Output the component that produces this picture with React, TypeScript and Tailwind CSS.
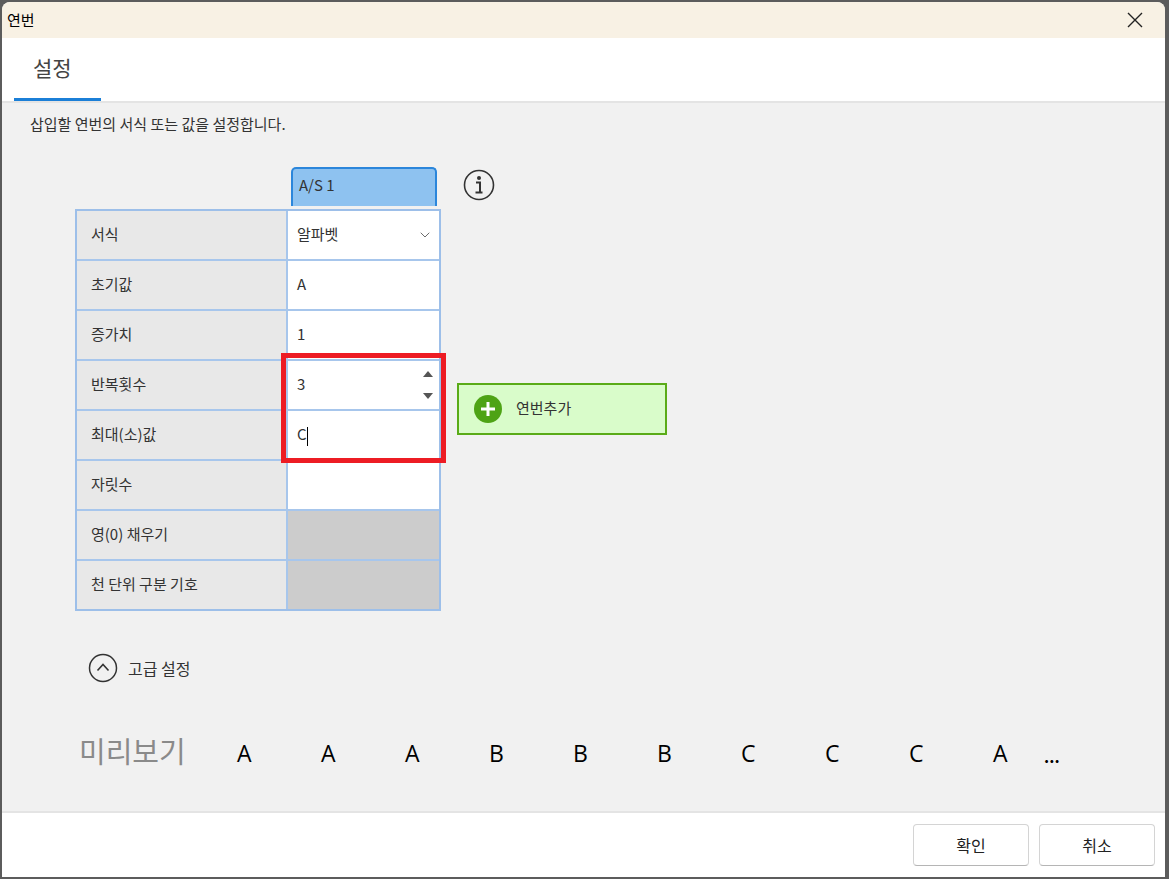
import { ChevronDown } from "lucide-react";

const F = { fontFamily: '"Noto Sans CJK KR", "Noto Sans", sans-serif' };

const rows: { label: string; value?: string; kind?: string }[] = [
  { label: "서식", value: "알파벳", kind: "select" },
  { label: "초기값", value: "A" },
  { label: "증가치", value: "1" },
  { label: "반복횟수", value: "3", kind: "spin" },
  { label: "최대(소)값", value: "C", kind: "caret" },
  { label: "자릿수", value: "" },
  { label: "영(0) 채우기", kind: "disabled" },
  { label: "천 단위 구분 기호", kind: "disabled" },
];

const preview = ["A", "A", "A", "B", "B", "B", "C", "C", "C", "A"];

export default function App() {
  return (
    <div className="w-[1169px] h-[879px] bg-[#5c5c5c] p-[2px] pr-[4px]" style={F}>
      <div className="w-full h-full rounded-t-[8px] overflow-hidden flex flex-col bg-[#f1f1f1]">
        {/* title bar */}
        <div className="h-[36px] bg-[#f8f1e4] flex items-center justify-between pl-[5px] pr-[22px]">
          <span className="text-[15px] text-black">연번</span>
          <svg width="16" height="16" viewBox="0 0 16 16" stroke="#222" strokeWidth="1.4">
            <path d="M1 1 L15 15 M15 1 L1 15" />
          </svg>
        </div>
        {/* tabs */}
        <div className="h-[65px] bg-white border-b-2 border-[#e4e4e4] flex items-end pl-[12px]">
          <div className="w-[87px] h-full flex flex-col justify-between">
            <span className="text-[21px] text-[#444] pl-[19px] pt-[14px]">설정</span>
            <div className="h-[3px] bg-[#1b7fd7]" />
          </div>
        </div>
        {/* content */}
        <div className="flex-1 relative">
          <p className="text-[15px] text-[#333] pl-[28px] pt-[10px]">삽입할 연번의 서식 또는 값을 설정합니다.</p>

          <div className="flex pl-[73px] pt-[31px]">
            <div>
              <div className="flex pl-[216px] items-end">
                <div className="w-[146px] h-[39px] bg-[#8ec2f0] border-2 border-b-0 border-[#2b86db] rounded-t-[5px] text-[15px] text-[#333] px-[6px] pt-[5px]">
                  A/S 1
                </div>
                <svg width="32" height="32" viewBox="0 0 32 32" className="ml-[26px] mb-[5px]">
                  <circle cx="16" cy="16" r="14.5" fill="none" stroke="#333" strokeWidth="1.6" />
                  <circle cx="16" cy="9" r="2" fill="#333" />
                  <path d="M13 13.5h4v10h2.5M12.5 23.5h7" fill="none" stroke="#333" strokeWidth="2" />
                </svg>
              </div>
              <div className="w-[366px] border-2 border-[#9dbfe9] mt-[3px]">
                {rows.map((r, i) => (
                  <div key={i} className={`flex ${i > 0 ? "h-[50px] border-t-2 border-[#a7c6ec]" : "h-[48px]"}`}>
                    <div className="w-[211px] bg-[#e8e8e8] border-r-2 border-[#a7c6ec] flex items-center pl-[14px] text-[15px] text-[#333]">
                      {r.label}
                    </div>
                    <div className={`flex-1 flex items-center pl-[9px] pr-[6px] text-[15px] text-[#333] ${r.kind === "disabled" ? "bg-[#cccccc]" : "bg-white"}`}>
                      <span className="flex-1">
                        {r.value}
                        {r.kind === "caret" && <span className="inline-block w-px h-[19px] bg-black align-middle" />}
                      </span>
                      {r.kind === "select" && <ChevronDown size={16} strokeWidth={1.3} color="#555" />}
                      {r.kind === "spin" && (
                        <div className="flex flex-col gap-[16px]">
                          <svg width="10" height="6"><path d="M0 6 L5 0 L10 6 Z" fill="#555" /></svg>
                          <svg width="10" height="6"><path d="M0 0 L5 6 L10 0 Z" fill="#555" /></svg>
                        </div>
                      )}
                    </div>
                  </div>
                ))}
              </div>
            </div>
            <div className="ml-[-38px] mt-[216px]">
              <div className="w-[210px] h-[52px] bg-[#d9fcca] border-2 border-[#5aab18] flex items-center pl-[15px] gap-[14px]">
                <svg width="28" height="28" viewBox="0 0 28 28">
                  <circle cx="14" cy="14" r="14" fill="#4ea315" />
                  <path d="M14 7v14M7 14h14" stroke="white" strokeWidth="3" />
                </svg>
                <span className="text-[15px] text-[#333]">연번추가</span>
              </div>
            </div>
          </div>

          {/* red highlight */}
          <div className="absolute left-[279px] top-[250px] w-[165px] h-[110px] border-[5px] border-[#ed1c24]" />

          <div className="flex items-center gap-[10px] pl-[86px] mt-[42px]">
            <svg width="30" height="30" viewBox="0 0 30 30">
              <circle cx="15" cy="15" r="13.5" fill="none" stroke="#333" strokeWidth="1.5" />
              <path d="M9.5 17.5 L15 11.5 L20.5 17.5" fill="none" stroke="#333" strokeWidth="1.6" />
            </svg>
            <span className="text-[16px] text-[#333]">고급 설정</span>
          </div>

          <div className="flex items-end pl-[77px] mt-[46px]">
            <span className="text-[29px] text-[#8a8a8a] w-[158px]">미리보기</span>
            {preview.map((c, i) => (
              <span key={i} className="w-[84px] text-[23px] text-black pb-[2px]" style={{ fontFamily: '"Open Sans", sans-serif' }}>
                {c}
              </span>
            ))}
            <span className="text-[16px] text-black font-bold pb-[4px] -ml-[33px]">...</span>
          </div>
        </div>
        {/* footer */}
        <div className="h-[66px] bg-white border-t-2 border-[#e4e4e4] flex items-center justify-end gap-[10px] pr-[10px]">
          {["확인", "취소"].map((t) => (
            <button key={t} className="w-[116px] h-[42px] bg-white border border-[#d4d4d4] border-b-[#b5b5b5] rounded-[4px] text-[16px] text-[#222]">
              {t}
            </button>
          ))}
        </div>
      </div>
    </div>
  );
}
